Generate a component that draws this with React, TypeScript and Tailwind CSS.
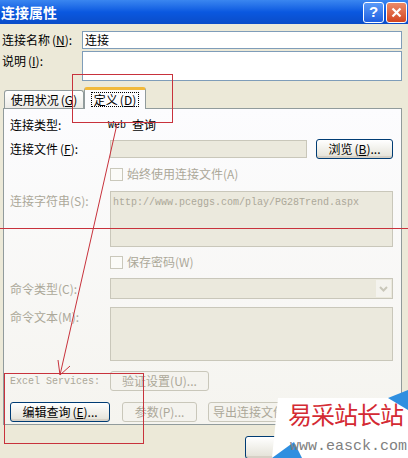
import React from 'react';

const cjk = { fontFamily: '"Noto Sans CJK SC", "Liberation Sans", sans-serif' };

function Key({ k }: { k: string }) {
  return <span className="ml-[2px]">(<span className="underline">{k}</span>)</span>;
}

function XpButton({ children, disabled, className = '' }: { children?: React.ReactNode; disabled?: boolean; className?: string }) {
  return (
    <div
      className={`flex h-[20px] items-center justify-center overflow-hidden whitespace-nowrap rounded-[3px] border text-[12px] leading-none ${
        disabled
          ? 'border-[#c9c7ba] bg-[#f4f3ee] text-[#aca899]'
          : 'border-[#003c74] bg-gradient-to-b from-white to-[#e3e1d6] text-black shadow-[inset_0_-2px_0_#d6d0c5]'
      } ${className}`}
    >
      {children}
    </div>
  );
}

function Check({ label }: { label: React.ReactNode }) {
  return (
    <div className="flex items-center gap-[4px] text-[12px] text-[#aca899]">
      <div className="h-[13px] w-[13px] border border-[#cac8bb] bg-[#fbfbf8]" />
      {label}
    </div>
  );
}

export default function App() {
  return (
    <div className="relative h-[458px] w-[408px] overflow-hidden bg-[#ece9d8]" style={cjk}>
      {/* title bar */}
      <div className="flex h-[24px] items-center justify-between bg-gradient-to-b from-[#3a86f0] via-[#0a58e0] to-[#0a4cc8] pr-[1px]">
        <span className="pl-[1px] text-[14px] font-bold text-white">连接属性</span>
        <div className="flex gap-[2px]">
          <div className="flex h-[21px] w-[21px] items-center justify-center rounded-[3px] border border-white bg-gradient-to-b from-[#5a9af8] to-[#1f5fe0] text-[15px] font-bold text-white" style={{ fontFamily: '"Liberation Sans", sans-serif' }}>
            ?
          </div>
          <div className="flex h-[21px] w-[21px] items-center justify-center rounded-[3px] border border-white bg-gradient-to-b from-[#ec8a68] to-[#d2431c]">
            <svg width="11" height="11" viewBox="0 0 11 11">
              <path d="M1.5 1.5 L9.5 9.5 M9.5 1.5 L1.5 9.5" stroke="white" strokeWidth="2.2" />
            </svg>
          </div>
        </div>
      </div>

      {/* name / description */}
      <div className="mt-[7px] flex h-[18px] items-center text-[12px]">
        <span className="w-[82px] pl-[2px]">连接名称<Key k="N" />:</span>
        <div className="flex h-[18px] w-[320px] items-center border border-[#7f9db9] bg-white pl-[2px]">连接</div>
      </div>
      <div className="mt-[2px] flex h-[30px] text-[12px]">
        <span className="w-[82px] pl-[2px] pt-[1px]">说明<Key k="I" />:</span>
        <div className="h-[30px] w-[320px] border border-[#7f9db9] bg-white" />
      </div>

      {/* tabs */}
      <div className="mt-[6px] flex h-[21px] items-end pl-[4px] text-[12px]">
        <div className="flex h-[18px] w-[80px] items-center justify-center rounded-t-[3px] border border-b-0 border-[#919b9c] bg-gradient-to-b from-white to-[#ecebe6]">
          使用状况<Key k="G" />
        </div>
        <div className="relative z-10 -mb-[1px] flex h-[22px] w-[62px] items-center justify-center rounded-t-[3px] border-x border-[#919b9c] border-t-[3px] border-t-[#f1b93a] bg-[#fcfcfe]">
          <span className="border border-dotted border-black px-[2px] leading-[13px]">定义<Key k="D" /></span>
        </div>
      </div>

      {/* panel */}
      <div className="ml-[3px] flex h-[317px] w-[399px] flex-col border border-[#919b9c] bg-gradient-to-b from-[#fcfcfe] to-[#f5f4ef] pl-[6px] pr-[8px] text-[12px]">
        <div className="mt-[9px] flex h-[14px] items-center">
          <span className="w-[98px]">连接类型:</span>
          <span className="flex items-center gap-[6px]">
            <span className="text-[10px]" style={{ fontFamily: '"Liberation Mono", monospace' }}>Web</span>
            <span>查询</span>
          </span>
        </div>
        <div className="mt-[7px] flex h-[20px] items-center">
          <span className="w-[100px]">连接文件<Key k="F" />:</span>
          <div className="h-[18px] w-[197px] border border-[#c9c7ba] bg-[#ebe9dd]" />
          <XpButton className="ml-[9px] w-[77px]">浏览<Key k="B" />...</XpButton>
        </div>
        <div className="mt-[8px] flex h-[14px] pl-[100px]">
          <Check label={<span>始终使用连接文件(A)</span>} />
        </div>
        <div className="mt-[10px] flex h-[56px] text-[#aca899]">
          <span className="w-[100px] pt-[1px]">连接字符串(S):</span>
          <div className="h-[56px] flex-1 border border-[#c9c7ba] bg-[#ebe9dd] pl-[2px] pt-[3px] text-[10px]" style={{ fontFamily: '"Liberation Mono", monospace' }}>
            http://www.pceggs.com/play/PG28Trend.aspx
          </div>
        </div>
        <div className="mt-[8px] flex h-[14px] pl-[100px]">
          <Check label={<span>保存密码(W)</span>} />
        </div>
        <div className="mt-[9px] flex h-[21px] items-center text-[#aca899]">
          <span className="w-[100px]">命令类型(C):</span>
          <div className="flex h-[21px] flex-1 items-center justify-end border border-[#c9c7ba] bg-[#ebe9dd] pr-[1px]">
            <div className="flex h-[17px] w-[15px] items-center justify-center bg-[#f4f3ee]">
              <svg width="9" height="6" viewBox="0 0 9 6">
                <path d="M1 1 L4.5 4.5 L8 1" fill="none" stroke="#c9c7ba" strokeWidth="2" />
              </svg>
            </div>
          </div>
        </div>
        <div className="mt-[8px] flex h-[54px] text-[#aca899]">
          <span className="w-[100px] pt-[1px]">命令文本(M):</span>
          <div className="h-[54px] flex-1 border border-[#c9c7ba] bg-[#ebe9dd]" />
        </div>
        <div className="mt-[10px] flex h-[20px] items-center text-[#aca899]">
          <span className="w-[100px] text-[10px]" style={{ fontFamily: '"Liberation Mono", monospace' }}>Excel Services:</span>
          <XpButton disabled className="w-[99px]">验证设置(U)...</XpButton>
        </div>
        <div className="mt-[11px] flex h-[20px] items-center">
          <XpButton className="w-[100px]">编辑查询<Key k="E" />...</XpButton>
          <XpButton disabled className="ml-[12px] w-[75px]">参数(P)...</XpButton>
          <XpButton disabled className="ml-[11px] w-[100px] justify-start pl-[4px]">导出连接文件</XpButton>
        </div>
      </div>

      {/* footer buttons */}
      <div className="mt-[11px] flex pl-[245px]">
        <XpButton className="h-[23px] w-[75px]" />
      </div>

      {/* watermark */}
      <div className="absolute left-[272px] top-[390px] h-[68px] w-[136px]">
        <svg className="absolute inset-0" width="136" height="68" viewBox="0 0 136 68">
          <polygon points="6,8 136,8 136,68 0,68" fill="white" />
          <polygon points="116,8 136,0 136,20" fill="#2f8fe0" />
          <polygon points="0,68 22,52 30,68" fill="#2f8fe0" />
        </svg>
        <div className="absolute left-[16px] top-[12px] text-[24px] leading-none tracking-[-1px] text-[#d42a33]" style={{ fontFamily: '"Noto Sans CJK SC", serif' }}>
          易采站长站
        </div>
        <div className="absolute left-[18px] top-[49px] text-[15px] leading-none text-[#808080]" style={{ fontFamily: '"Liberation Mono", monospace' }}>
          www.easck.com
        </div>
      </div>

      {/* red annotations */}
      <svg className="pointer-events-none absolute inset-0" width="408" height="458" viewBox="0 0 408 458">
        <g fill="none" stroke="#c8323c" strokeWidth="1">
          <rect x="72.5" y="74.5" width="100" height="48" />
          <line x1="0" y1="228.5" x2="408" y2="228.5" />
          <line x1="117" y1="124" x2="60" y2="375" />
          <line x1="60" y1="375" x2="58" y2="360" />
          <line x1="60" y1="375" x2="70" y2="366" />
          <rect x="4.5" y="373.5" width="139" height="70" />
        </g>
      </svg>
    </div>
  );
}
